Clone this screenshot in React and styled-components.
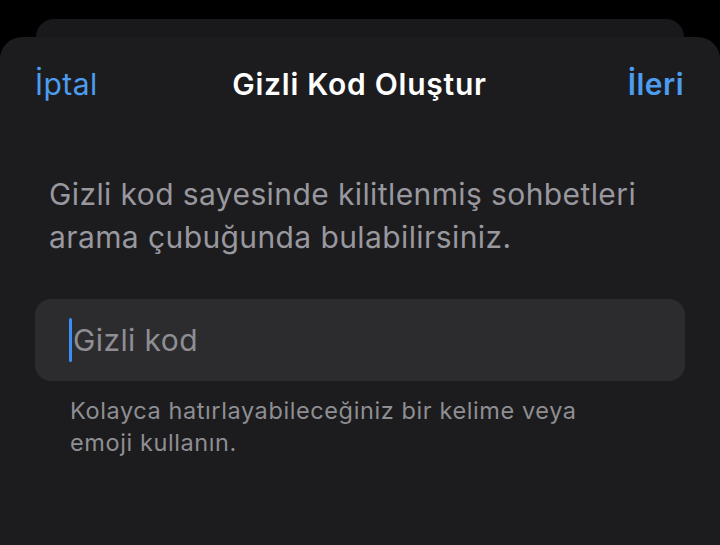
import React from "react";
import styled, { createGlobalStyle } from "styled-components";

const Global = createGlobalStyle`
  html, body { margin: 0; padding: 0; background: #000; }
  body { font-family: Inter, "Liberation Sans", sans-serif; -webkit-font-smoothing: antialiased; }
`;

const Screen = styled.div`
  width: 720px;
  height: 545px;
  background: #000;
  overflow: hidden;
  display: flex;
  flex-direction: column;
  padding-top: 19px;
  box-sizing: border-box;
`;

const BackSheet = styled.div`
  margin: 0 36px;
  height: 40px;
  margin-bottom: -22px;
  background: #19191b;
  border-radius: 18px 18px 0 0;
`;

const Sheet = styled.div`
  flex: 1;
  background: #1c1c1e;
  border-radius: 22px 22px 0 0;
  position: relative;
  display: flex;
  flex-direction: column;
`;

const NavBar = styled.div`
  display: grid;
  grid-template-columns: 1fr auto 1fr;
  align-items: center;
  padding: 27px 36px 0 35px;
  height: 40px;
`;

const NavButton = styled.span`
  color: #4c9cf0;
  font-size: 30px;
  letter-spacing: 0.45px;
  justify-self: ${(p) => (p.$right ? "end" : "start")};
  font-weight: ${(p) => (p.$bold ? 600 : 400)};
`;

const Title = styled.span`
  color: #fff;
  font-size: 30px;
  font-weight: 600;
  letter-spacing: 0.75px;
`;

const Description = styled.p`
  margin: 69px 30px 0 49px;
  color: #98989e;
  font-size: 30px;
  line-height: 43px;
  letter-spacing: 0.4px;
`;

const Field = styled.div`
  margin: 40px 35px 0 35px;
  height: 82px;
  background: #2c2c2e;
  border-radius: 16px;
  display: flex;
  align-items: center;
  padding-left: 34px;
`;

const Caret = styled.span`
  width: 3px;
  height: 44px;
  background: #3a8ef6;
  border-radius: 2px;
  margin-right: 1px;
`;

const Placeholder = styled.span`
  color: #8e8e93;
  font-size: 30px;
  letter-spacing: 0.4px;
`;

const Hint = styled.p`
  margin: 13.5px 40px 0 70px;
  color: #8e8e93;
  font-size: 23.5px;
  line-height: 32.4px;
  letter-spacing: 0.6px;
`;

export default function App() {
  return (
    <Screen>
      <Global />
      <BackSheet />
      <Sheet>
        <NavBar>
          <NavButton>İptal</NavButton>
          <Title>Gizli Kod Oluştur</Title>
          <NavButton $right $bold>İleri</NavButton>
        </NavBar>
        <Description>
          Gizli kod sayesinde kilitlenmiş sohbetleri
          <br />
          arama çubuğunda bulabilirsiniz.
        </Description>
        <Field>
          <Caret />
          <Placeholder>Gizli kod</Placeholder>
        </Field>
        <Hint>
          Kolayca hatırlayabileceğiniz bir kelime veya
          <br />
          emoji kullanın.
        </Hint>
      </Sheet>
    </Screen>
  );
}
